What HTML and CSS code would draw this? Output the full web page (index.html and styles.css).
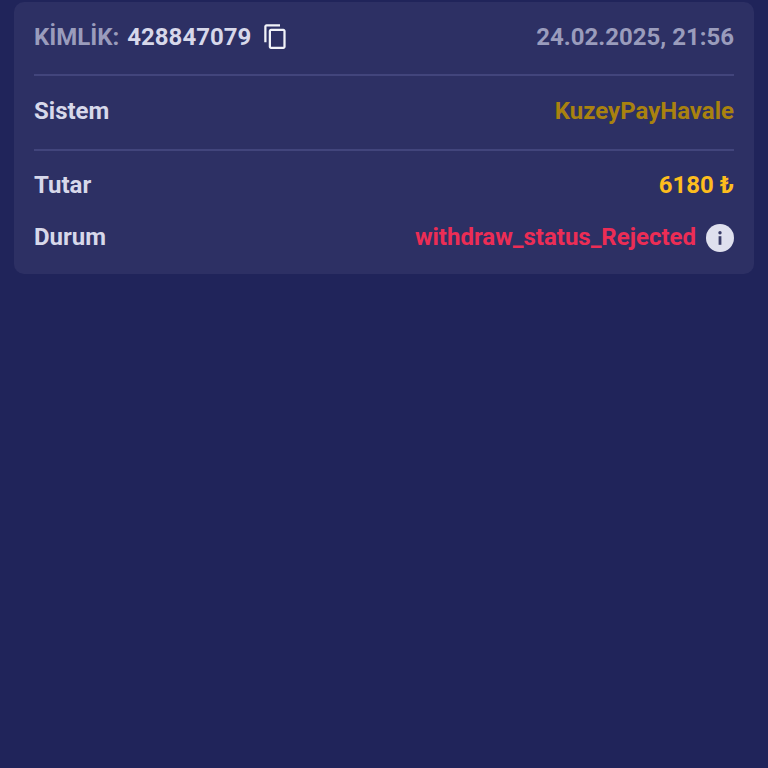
FILE: index.html
```html
<!DOCTYPE html>
<html>
<head>
  <title>Withdraw Details</title>
  <link rel="stylesheet" href="styles.css">
</head>
<body>
  <div class="card">
    <div class="row head-row">
      <div class="id-group">
        <span class="id-label">KİMLİK:</span>
        <span class="id-value">428847079</span>
        <svg class="copy-icon" viewBox="0 0 24 24" width="27" height="27" fill="#f1f2f8">
          <path d="M16 1H4c-1.1 0-2 .9-2 2v14h2V3h12V1zm3 4H8c-1.1 0-2 .9-2 2v14c0 1.1.9 2 2 2h11c1.1 0 2-.9 2-2V7c0-1.1-.9-2-2-2zm0 16H8V7h11v14z"/>
        </svg>
      </div>
      <span class="date">24.02.2025, 21:56</span>
    </div>
    <div class="row system-row">
      <span class="label">Sistem</span>
      <span class="system">KuzeyPayHavale</span>
    </div>
    <div class="details">
      <div class="row detail-row">
        <span class="label">Tutar</span>
        <span class="amount">6180 ₺</span>
      </div>
      <div class="row detail-row">
        <span class="label">Durum</span>
        <div class="status-group">
          <span class="status">withdraw_status_Rejected</span>
          <svg class="info-icon" viewBox="0 0 28 28" width="28" height="28">
            <circle cx="14" cy="14" r="14" fill="#dfe0ee"/>
            <circle cx="14" cy="8.8" r="1.7" fill="#3a3c68"/>
            <rect x="12.6" y="12.2" width="2.8" height="8.6" fill="#3a3c68"/>
          </svg>
        </div>
      </div>
    </div>
  </div>
</body>
</html>
```
FILE: styles.css
```css
html, body {
  height: 100%;
}

body {
  margin: 0;
  padding: 2px 14px 0;
  box-sizing: border-box;
  background-color: #20245a;
  font-family: Roboto, "Noto Sans", sans-serif;
  font-size: 24px;
  font-weight: 700;
  color: #d7d8ea;
}

.card {
  padding: 0 20px 10px;
  background-color: #2d3064;
  border-radius: 10px;
}

.row {
  display: flex;
  justify-content: space-between;
  align-items: center;
  line-height: 28px;
}

.head-row {
  height: 69px;
  padding-bottom: 3px;
  border-bottom: 2px solid #42457c;
}

.system-row {
  height: 70px;
  padding-bottom: 3px;
  border-bottom: 2px solid #42457c;
}

.details {
  padding-top: 9px;
}

.detail-row {
  height: 50px;
  padding-bottom: 2px;
}

.id-group, .status-group {
  display: flex;
  align-items: center;
}

.id-label {
  color: #9a9cbc;
  margin-right: 8px;
}

.id-value {
  margin-right: 11px;
}

.date {
  color: #9a9cbc;
}

.system {
  color: #a9820f;
}

.amount {
  color: #fdbd1e;
}

.status {
  color: #ec2d55;
  margin-right: 10px;
}

.info-icon {
  margin-top: 2px;
}
```
